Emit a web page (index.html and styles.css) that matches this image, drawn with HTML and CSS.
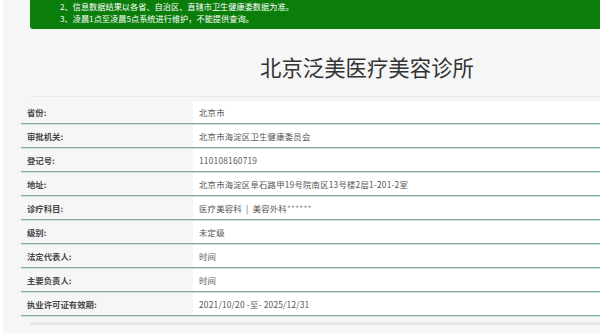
FILE: index.html
```html
<!DOCTYPE html>
<html lang="zh-CN">
<head>
    <meta charset="UTF-8">
    <meta name="viewport" content="width=device-width, initial-scale=1.0">
    <title>北京泛美医疗美容诊所</title>
    <link rel="stylesheet" href="styles.css">
</head>
<body>
    <div class="page">
        <div class="notice">
            <p>2、信息数据结果以各省、自治区、直辖市卫生健康委数据为准。</p>
            <p>3、凌晨1点至凌晨5点系统进行维护，不能提供查询。</p>
        </div>

        <h1 class="title">北京泛美医疗美容诊所</h1>

        <div class="info">
            <div class="row"><div class="label">省份:</div><div class="value">北京市</div></div>
            <div class="row"><div class="label">审批机关:</div><div class="value">北京市海淀区卫生健康委员会</div></div>
            <div class="row"><div class="label">登记号:</div><div class="value">110108160719</div></div>
            <div class="row"><div class="label">地址:</div><div class="value">北京市海淀区阜石路甲19号院南区13号楼2层1-201-2室</div></div>
            <div class="row"><div class="label">诊疗科目:</div><div class="value">医疗美容科 &nbsp;|&nbsp; 美容外科<span class="mask">******</span></div></div>
            <div class="row"><div class="label">级别:</div><div class="value">未定级</div></div>
            <div class="row"><div class="label">法定代表人:</div><div class="value">时间</div></div>
            <div class="row"><div class="label">主要负责人:</div><div class="value">时间</div></div>
            <div class="row"><div class="label">执业许可证有效期:</div><div class="value">2021/10/20 -至- 2025/12/31</div></div>
        </div>

        <div class="foot-line"></div>
    </div>
</body>
</html>
```

FILE: styles.css
```css
body {
    margin: 0;
    background: #fff;
    font-family: "Noto Sans CJK SC", "Noto Sans", sans-serif;
    color: #333;
    overflow: hidden;
}
.page {
    margin-left: 3px;
    background: #f6f6f6;
    height: 333px;
    overflow: hidden;
}
.notice {
    margin-left: 27px;
    width: 700px;
    background: #0a7d0a;
    color: #fff;
    padding: 0 0 5px 30px;
    border-bottom-left-radius: 3px;
    font-size: 8.2px;
    line-height: 12px;
}
.notice p {
    margin: 0;
}
.title {
    margin: 23px 0 0 27px;
    width: 700px;
    padding: 0 0 14px 230px;
    box-sizing: border-box;
    font-size: 21.4px;
    line-height: 30px;
    font-weight: normal;
    color: #333;
    border-bottom: 1px solid #e9e9e9;
}
.info {
    margin: 4px 0 0 18px;
    width: 700px;
    font-size: 8.4px;
}
.row {
    display: flex;
    height: 22px;
    border-bottom: 1px solid #7fa996;
    box-shadow: 0 1px 0 #d3e5dc;
    margin-bottom: 1px;
}
.label {
    width: 166px;
    padding-left: 6px;
    display: flex;
    align-items: center;
    font-weight: bold;
    color: #484848;
}
.value {
    flex: 1;
    background: #fff;
    padding-left: 6px;
    display: flex;
    align-items: center;
    white-space: pre;
    color: #555;
    letter-spacing: 0.2px;
}
.mask {
    color: #999;
}
.foot-line {
    margin: 6px 0 0 27px;
    width: 700px;
    height: 3px;
    background: #e8e8e8;
}
```
